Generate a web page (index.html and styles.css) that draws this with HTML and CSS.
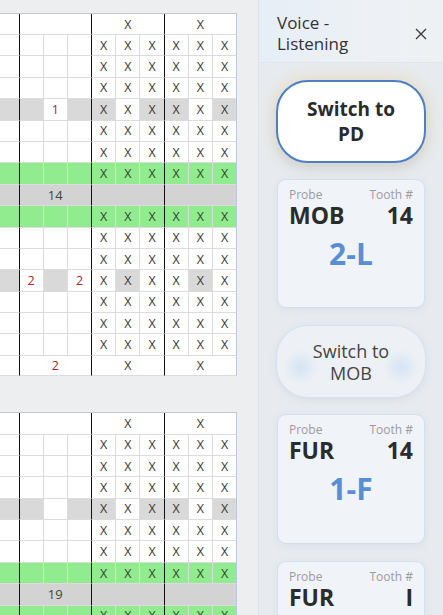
FILE: index.html
```html
<!DOCTYPE html>
<html>
<head>
<meta charset="utf-8">
<link rel="stylesheet" href="styles.css">
</head>
<body>
<div class="page">
  <div class="left">
    <div class="tbl t1">
      <div class="row m"><div class="c"></div><div class="c"></div><div class="c">X</div><div class="c">X</div></div>
      <div class="row"><div class="c"></div><div class="c"></div><div class="c"></div><div class="c"></div><div class="c">X</div><div class="c">X</div><div class="c">X</div><div class="c">X</div><div class="c">X</div><div class="c">X</div></div>
      <div class="row"><div class="c"></div><div class="c"></div><div class="c"></div><div class="c"></div><div class="c">X</div><div class="c">X</div><div class="c">X</div><div class="c">X</div><div class="c">X</div><div class="c">X</div></div>
      <div class="row"><div class="c"></div><div class="c"></div><div class="c"></div><div class="c"></div><div class="c">X</div><div class="c">X</div><div class="c">X</div><div class="c">X</div><div class="c">X</div><div class="c">X</div></div>
      <div class="row"><div class="c g"></div><div class="c g"></div><div class="c red">1</div><div class="c g"></div><div class="c g">X</div><div class="c">X</div><div class="c g">X</div><div class="c g">X</div><div class="c">X</div><div class="c g">X</div></div>
      <div class="row"><div class="c"></div><div class="c"></div><div class="c"></div><div class="c"></div><div class="c">X</div><div class="c">X</div><div class="c">X</div><div class="c">X</div><div class="c">X</div><div class="c">X</div></div>
      <div class="row"><div class="c"></div><div class="c"></div><div class="c"></div><div class="c"></div><div class="c">X</div><div class="c">X</div><div class="c">X</div><div class="c">X</div><div class="c">X</div><div class="c">X</div></div>
      <div class="row green"><div class="c"></div><div class="c"></div><div class="c"></div><div class="c"></div><div class="c">X</div><div class="c">X</div><div class="c">X</div><div class="c">X</div><div class="c">X</div><div class="c">X</div></div>
      <div class="row m grey"><div class="c"></div><div class="c num">14</div><div class="c"></div><div class="c"></div></div>
      <div class="row green"><div class="c"></div><div class="c"></div><div class="c"></div><div class="c"></div><div class="c">X</div><div class="c">X</div><div class="c">X</div><div class="c">X</div><div class="c">X</div><div class="c">X</div></div>
      <div class="row"><div class="c"></div><div class="c"></div><div class="c"></div><div class="c"></div><div class="c">X</div><div class="c">X</div><div class="c">X</div><div class="c">X</div><div class="c">X</div><div class="c">X</div></div>
      <div class="row"><div class="c"></div><div class="c"></div><div class="c"></div><div class="c"></div><div class="c">X</div><div class="c">X</div><div class="c">X</div><div class="c">X</div><div class="c">X</div><div class="c">X</div></div>
      <div class="row"><div class="c g"></div><div class="c red">2</div><div class="c g"></div><div class="c red">2</div><div class="c">X</div><div class="c g">X</div><div class="c">X</div><div class="c">X</div><div class="c g">X</div><div class="c">X</div></div>
      <div class="row"><div class="c"></div><div class="c"></div><div class="c"></div><div class="c"></div><div class="c">X</div><div class="c">X</div><div class="c">X</div><div class="c">X</div><div class="c">X</div><div class="c">X</div></div>
      <div class="row"><div class="c"></div><div class="c"></div><div class="c"></div><div class="c"></div><div class="c">X</div><div class="c">X</div><div class="c">X</div><div class="c">X</div><div class="c">X</div><div class="c">X</div></div>
      <div class="row"><div class="c"></div><div class="c"></div><div class="c"></div><div class="c"></div><div class="c">X</div><div class="c">X</div><div class="c">X</div><div class="c">X</div><div class="c">X</div><div class="c">X</div></div>
      <div class="row m"><div class="c"></div><div class="c red">2</div><div class="c">X</div><div class="c">X</div></div>
    </div>

    <div class="tbl t2">
      <div class="row m"><div class="c"></div><div class="c"></div><div class="c">X</div><div class="c">X</div></div>
      <div class="row"><div class="c"></div><div class="c"></div><div class="c"></div><div class="c"></div><div class="c">X</div><div class="c">X</div><div class="c">X</div><div class="c">X</div><div class="c">X</div><div class="c">X</div></div>
      <div class="row"><div class="c"></div><div class="c"></div><div class="c"></div><div class="c"></div><div class="c">X</div><div class="c">X</div><div class="c">X</div><div class="c">X</div><div class="c">X</div><div class="c">X</div></div>
      <div class="row"><div class="c"></div><div class="c"></div><div class="c"></div><div class="c"></div><div class="c">X</div><div class="c">X</div><div class="c">X</div><div class="c">X</div><div class="c">X</div><div class="c">X</div></div>
      <div class="row"><div class="c g"></div><div class="c g"></div><div class="c"></div><div class="c g"></div><div class="c g">X</div><div class="c">X</div><div class="c g">X</div><div class="c g">X</div><div class="c">X</div><div class="c g">X</div></div>
      <div class="row"><div class="c"></div><div class="c"></div><div class="c"></div><div class="c"></div><div class="c">X</div><div class="c">X</div><div class="c">X</div><div class="c">X</div><div class="c">X</div><div class="c">X</div></div>
      <div class="row"><div class="c"></div><div class="c"></div><div class="c"></div><div class="c"></div><div class="c">X</div><div class="c">X</div><div class="c">X</div><div class="c">X</div><div class="c">X</div><div class="c">X</div></div>
      <div class="row green"><div class="c"></div><div class="c"></div><div class="c"></div><div class="c"></div><div class="c">X</div><div class="c">X</div><div class="c">X</div><div class="c">X</div><div class="c">X</div><div class="c">X</div></div>
      <div class="row m grey"><div class="c"></div><div class="c num">19</div><div class="c"></div><div class="c"></div></div>
      <div class="row green"><div class="c"></div><div class="c"></div><div class="c"></div><div class="c"></div><div class="c">X</div><div class="c">X</div><div class="c">X</div><div class="c">X</div><div class="c">X</div><div class="c">X</div></div>
    </div>
  </div>

  <div class="panel">
    <div class="phead">
      <div class="ptitle">Voice -<br>Listening</div>
      <svg class="close" width="12" height="12" viewBox="0 0 12 12"><path d="M1 1 L11 11 M11 1 L1 11" stroke="#3a3a3a" stroke-width="1.3" fill="none"/></svg>
    </div>
    <div class="pbody">
      <div class="btn active">Switch to<br>PD</div>
      <div class="card c1">
        <div class="labels"><span>Probe</span><span>Tooth #</span></div>
        <div class="vals"><span>MOB</span><span>14</span></div>
        <div class="result">2-L</div>
      </div>
      <div class="btn plain">Switch to<br>MOB</div>
      <div class="card c2">
        <div class="labels"><span>Probe</span><span>Tooth #</span></div>
        <div class="vals"><span>FUR</span><span>14</span></div>
        <div class="result">1-F</div>
      </div>
      <div class="card c3">
        <div class="labels"><span>Probe</span><span>Tooth #</span></div>
        <div class="vals"><span>FUR</span><span>I</span></div>
        <div class="result"></div>
      </div>
    </div>
  </div>
</div>
</body>
</html>
```

FILE: styles.css
```css
* { box-sizing: border-box; }
html, body {
  margin: 0;
  padding: 0;
  width: 443px;
  height: 615px;
  overflow: hidden;
  background: #eceef0;
  font-family: "Open Sans", "Noto Sans", sans-serif;
}
.page {
  display: flex;
  height: 615px;
  overflow: hidden;
}
.left {
  width: 258px;
  flex: none;
  padding-top: 13.3px;
}
.tbl {
  display: grid;
  grid-template-columns: 19.5px repeat(9, 24.2px);
  width: 237.3px;
  background: #fff;
  border-top: 1px solid #c8c8c8;
  font-size: 12.5px;
  color: #363636;
}
.t1 {
  grid-template-rows: 20.7px repeat(15, 21.4px) 20px;
}
.t2 {
  margin-top: 35.7px;
  grid-template-rows: 22px repeat(9, 21.4px);
}
.row { display: contents; }
.c {
  display: flex;
  align-items: center;
  justify-content: center;
  border-right: 1px solid #dcdcdc;
  border-bottom: 1px solid #dcdcdc;
  background: #fff;
}
.row > .c:nth-child(1),
.row > .c:nth-child(4),
.row > .c:nth-child(7) { border-right-color: #111; }
.row > .c:nth-child(10) { border-right-color: #b7c8e2; }
.row.m > .c:nth-child(4) { border-right-color: #b7c8e2; }
.row.m > .c:nth-child(2),
.row.m > .c:nth-child(3) { border-right-color: #111; }
.row.m > .c:nth-child(n+2) { grid-column: span 3; }
.c.g { background: #d9d9d9; }
.green > .c { background: #90ec8e; color: #334433; }
.grey > .c { background: #d3d3d3; }
.red { color: #a3282c; font-size: 12.5px; }
.num { font-size: 13px; color: #444; }

.panel {
  flex: 1;
  background: #e7ebef;
  border-left: 1px solid #dfe4ea;
}
.phead {
  height: 63px;
  padding: 11.8px 16px 0 18px;
  display: flex;
  justify-content: space-between;
  align-items: flex-start;
  background: linear-gradient(90deg, #e6eef7 0%, #edf1f5 60%, #eef1f4 100%);
  border-bottom: 1px solid #e2e6eb;
}
.ptitle {
  font-size: 17px;
  line-height: 21px;
  color: #333;
}
.close { margin-top: 16px; }
.pbody {
  padding: 17px 17px 0 17px;
  display: flex;
  flex-direction: column;
}
.btn {
  width: 150px;
  flex: none;
  display: flex;
  align-items: center;
  justify-content: center;
  text-align: center;
  border-radius: 32px;
}
.btn.active {
  height: 83px;
  background: #fff;
  border: 2.5px solid #4d7ec6;
  font-weight: 700;
  font-size: 19px;
  line-height: 25px;
  color: #2a2a2a;
  box-shadow: 0 0 14px 3px rgba(236, 206, 150, 0.45), 0 6px 10px rgba(180, 200, 230, 0.5);
  margin-bottom: 16px;
}
.btn.plain {
  height: 73px;
  background:
    radial-gradient(circle at 16% 58%, rgba(205, 223, 243, 0.75) 0, rgba(205, 223, 243, 0) 18px),
    radial-gradient(circle at 84% 58%, rgba(205, 223, 243, 0.75) 0, rgba(205, 223, 243, 0) 18px),
    #edf1f5;
  border: 1px solid #d7e1ec;
  font-size: 18px;
  line-height: 22px;
  color: #444;
  box-shadow: 0 2px 6px rgba(200, 210, 225, 0.5);
  margin-bottom: 16px;
}
.card {
  width: 148px;
  flex: none;
  margin-left: 1px;
  height: 130px;
  background: #f0f3f7;
  border: 1px solid #d3e0ef;
  border-radius: 9px;
  padding: 7px 11px 0 11px;
  box-shadow: 0 2px 6px rgba(200, 210, 225, 0.45);
}
.card.c1 { height: 129px; margin-bottom: 17px; }
.card.c2 { margin-bottom: 17px; }
.labels {
  display: flex;
  justify-content: space-between;
  font-size: 12px;
  line-height: 15px;
  color: #9c9c9c;
}
.vals {
  display: flex;
  justify-content: space-between;
  margin-top: 2px;
  font-size: 23px;
  line-height: 22px;
  font-weight: 700;
  color: #2b2b2b;
}
.result {
  margin-top: 9.7px;
  text-align: center;
  font-size: 30px;
  line-height: 36px;
  font-weight: 700;
  color: #5a8ed4;
}
```
